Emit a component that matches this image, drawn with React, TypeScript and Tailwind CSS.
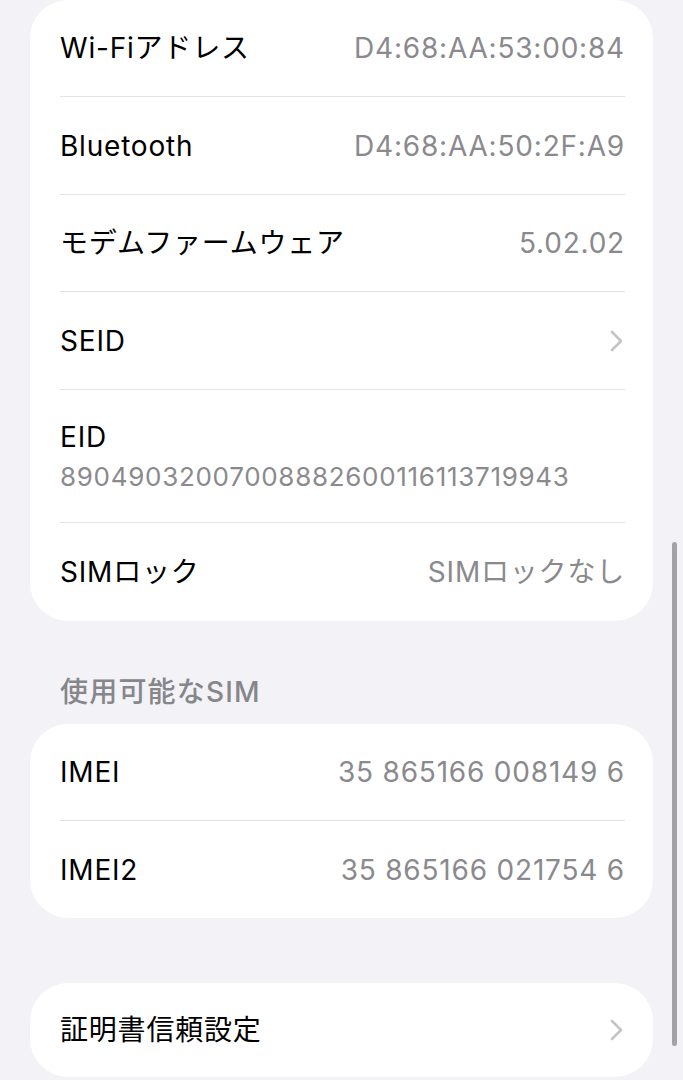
import React from "react";

const FONT = { fontFamily: "Inter, 'Noto Sans CJK JP', sans-serif" };

function Chevron() {
  return (
    <svg width="13" height="22" viewBox="0 0 13 22" fill="none" className="shrink-0">
      <path d="M2 2 L11 11 L2 20" stroke="#c4c4c8" strokeWidth="2.6" strokeLinecap="round" strokeLinejoin="round" />
    </svg>
  );
}

function Row({ label, value, chevron, last, h = "h-[97px]" }: { label: string; value?: string; chevron?: boolean; last?: boolean; h?: string }) {
  return (
    <div className={`ml-[30px] mr-[28px] ${h} flex items-center justify-between ${last ? "" : "border-b border-[#e3e3e6]"}`}>
      <span className="text-[28px] tracking-[0.8px] text-black">{label}</span>
      {value && <span className="text-[28px] tracking-[0.8px] text-[#8a8a8e]">{value}</span>}
      {chevron && <span className="pr-[2px]"><Chevron /></span>}
    </div>
  );
}

export default function App() {
  return (
    <div className="relative w-[683px] h-[1080px] overflow-hidden bg-[#f2f2f7] antialiased" style={FONT}>
      <div className="mx-[30px] bg-white rounded-[38px]">
        <Row label="Wi-Fiアドレス" value="D4:68:AA:53:00:84" />
        <Row label="Bluetooth" value="D4:68:AA:50:2F:A9" h="h-[98px]" />
        <Row label="モデムファームウェア" value="5.02.02" />
        <Row label="SEID" chevron h="h-[98px]" />
        <div className="ml-[30px] mr-[28px] h-[133px] flex flex-col justify-center border-b border-[#e3e3e6]">
          <span className="text-[28px] tracking-[0.8px] text-black leading-[36px]">EID</span>
          <span className="text-[26px] tracking-[0.7px] text-[#8a8a8e] leading-[32px] mt-[6px]">89049032007008882600116113719943</span>
        </div>
        <Row label="SIMロック" value="SIMロックなし" last h="h-[98px]" />
      </div>

      <div className="h-[103px] flex items-end pb-[11px] pl-[60px]">
        <span className="text-[28px] tracking-[1.2px] font-medium text-[#86868b]">使用可能なSIM</span>
      </div>

      <div className="mx-[30px] bg-white rounded-[38px]">
        <Row label="IMEI" value="35 865166 008149 6" />
        <Row label="IMEI2" value="35 865166 021754 6" last />
      </div>

      <div className="h-[65px]" />

      <div className="mx-[30px] bg-white rounded-[38px]">
        <Row label="証明書信頼設定" chevron last h="h-[94px]" />
      </div>

      <div className="absolute left-[672px] top-[542px] w-[5px] h-[504px] rounded-full bg-[#a3a3a7]" />
    </div>
  );
}
